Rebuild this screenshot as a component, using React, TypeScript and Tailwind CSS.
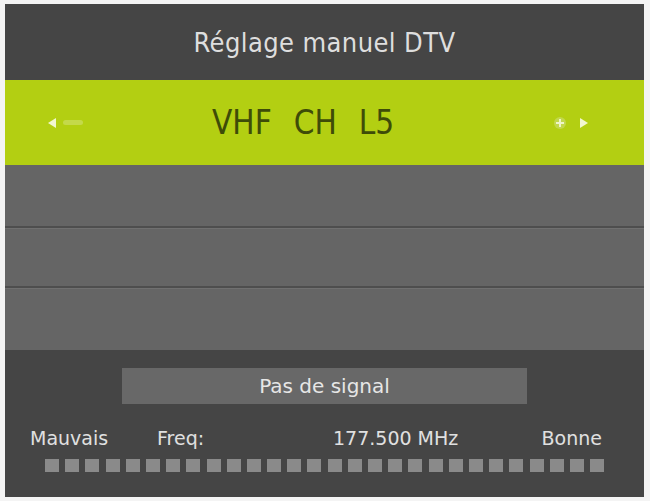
import React from "react";

const squares = Array.from({ length: 28 }, (_, i) => i);

export default function App() {
  return (
    <div className="h-[501px] w-[650px] bg-[#f4f4f4] pl-[5px] pr-[6px] pt-[4px] pb-[4px]">
      <div
        className="flex h-full flex-col bg-[#454545]"
        style={{ fontFamily: '"DejaVu Sans Condensed", "DejaVu Sans", sans-serif' }}
      >
        {/* title */}
        <div className="flex h-[76px] items-center justify-center pt-[2px] text-[27px] tracking-[0.4px] text-[#dedede]">
          Réglage manuel DTV
        </div>

        {/* selected channel */}
        <div className="flex h-[85px] items-center bg-[#b3cf12] pl-[42px] pr-[55px]">
          <div className="flex items-center gap-[6px]">
            <svg width="10" height="12" viewBox="0 0 10 12">
              <path d="M9 1 L1 6 L9 11 Z" fill="#f2f7d0" />
            </svg>
            <div className="h-[5px] w-[20px] rounded-full bg-[#c4d94a]" />
          </div>
          <div className="ml-[129px] flex gap-[22px] text-[33px] text-[#3e4c08]">
            <span>VHF</span>
            <span>CH</span>
            <span>L5</span>
          </div>
          <div className="ml-auto flex items-center gap-[12px]">
            <svg width="14" height="14" viewBox="0 0 14 14">
              <circle cx="7" cy="7" r="6" fill="#c2d84c" />
              <path d="M7 3 V11 M3 7 H11" stroke="#eef5c8" strokeWidth="2" />
            </svg>
            <svg width="10" height="12" viewBox="0 0 10 12">
              <path d="M1 1 L9 6 L1 11 Z" fill="#f2f7d0" />
            </svg>
          </div>
        </div>

        {/* empty rows */}
        <div className="flex flex-col bg-[#656565]">
          <div className="h-[63px] border-b-2 border-[#4e4e4e]" />
          <div className="h-[60px] border-b-2 border-t border-[#4e4e4e] border-t-[#707070]" />
          <div className="h-[62px] border-t border-[#707070]" />
        </div>

        {/* status */}
        <div className="flex flex-1 flex-col pt-[18px]" style={{ fontFamily: '"DejaVu Sans", sans-serif' }}>
          <div className="mx-auto flex h-[36px] w-[405px] items-center justify-center bg-[#686868] text-[20px] text-[#e6e6e6]">
            Pas de signal
          </div>
          <div className="mt-[22px] flex items-center pl-[25px] text-[19px] leading-[24px] text-[#e0e0e0]">
            <span className="w-[127px]">Mauvais</span>
            <span className="w-[176px]">Freq:</span>
            <span className="flex-1">177.500 MHz</span>
            <span className="pr-[42px]">Bonne</span>
          </div>
          <div className="mt-[9px] flex gap-[6.2px] pl-[40px]">
            {squares.map((i) => (
              <div key={i} className="h-[13px] w-[14px] bg-[#8a8a8a]" />
            ))}
          </div>
        </div>
      </div>
    </div>
  );
}
